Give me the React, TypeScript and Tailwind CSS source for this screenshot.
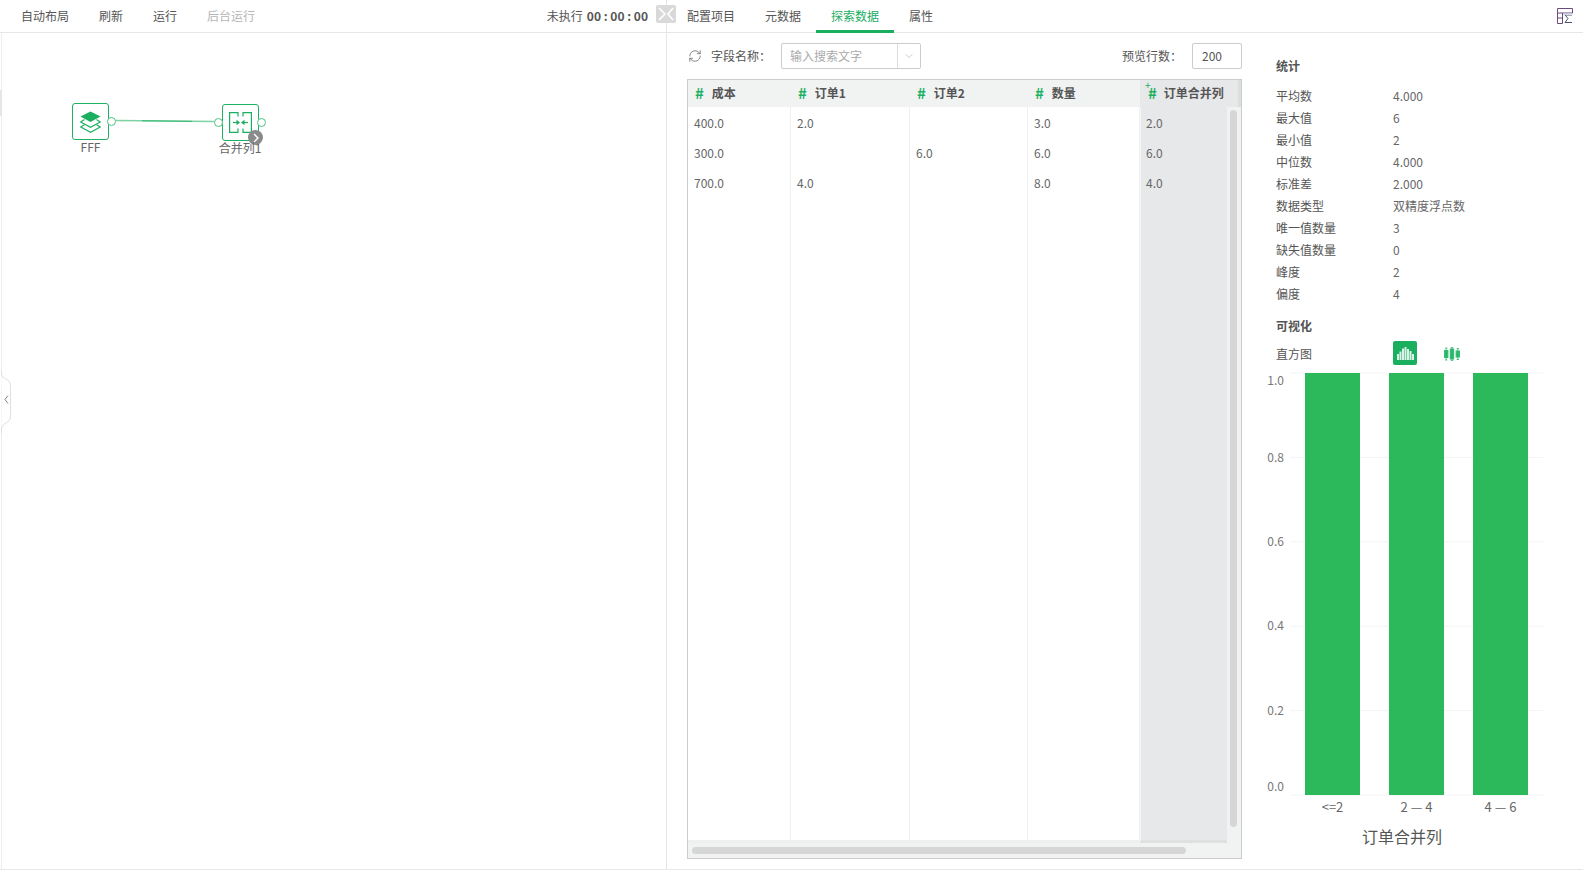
import React from 'react';
import { ChevronDown, RefreshCw } from 'lucide-react';

const GREEN = '#1aae5f';

const columns = [
  { name: '成本', width: 'w-[103px]', values: ['400.0', '300.0', '700.0'] },
  { name: '订单1', width: 'w-[119px]', values: ['2.0', '', '4.0'] },
  { name: '订单2', width: 'w-[118px]', values: ['', '6.0', ''] },
  { name: '数量', width: 'w-[112px]', values: ['3.0', '6.0', '8.0'] },
];

const stats = [
  ['平均数', '4.000'],
  ['最大值', '6'],
  ['最小值', '2'],
  ['中位数', '4.000'],
  ['标准差', '2.000'],
  ['数据类型', '双精度浮点数'],
  ['唯一值数量', '3'],
  ['缺失值数量', '0'],
  ['峰度', '2'],
  ['偏度', '4'],
];

const LayersIcon = () => (
  <svg width="21" height="22" viewBox="0 0 21 22">
    <path d="M10.5 0.5 L20.5 5.5 L10.5 11 L0.5 5.5 Z" fill={GREEN} />
    <path d="M4.5 8.5 L0.7 11 L10.5 16.3 L20.3 11 L16.5 8.5" fill="none" stroke={GREEN} strokeWidth="1.1" />
    <path d="M4.5 13.8 L0.7 16 L10.5 21.3 L20.3 16 L16.5 13.8" fill="none" stroke={GREEN} strokeWidth="1.1" />
  </svg>
);

const MergeIcon = () => (
  <svg width="23" height="21" viewBox="0 0 23 21" fill="none" stroke={GREEN} strokeWidth="1.2">
    <path d="M9 4.5 V0.6 H0.6 V20.4 H9 V16.5" />
    <path d="M14 4.5 V0.6 H22.4 V20.4 H14 V16.5" />
    <path d="M4 10.5 H8" />
    <path d="M19 10.5 H15" />
    <path d="M7.5 7.8 L11 10.5 L7.5 13.2 Z" fill={GREEN} stroke="none" />
    <path d="M15.5 7.8 L12 10.5 L15.5 13.2 Z" fill={GREEN} stroke="none" />
  </svg>
);

const HistogramIcon = () => (
  <svg width="17" height="13" viewBox="0 0 17 13" fill="#fff" opacity="0.85">
    <rect x="0" y="7" width="2" height="6" />
    <rect x="2.5" y="4.5" width="2" height="8.5" />
    <rect x="5" y="1.5" width="2" height="11.5" />
    <rect x="7.5" y="0" width="2" height="13" />
    <rect x="10" y="2" width="2" height="11" />
    <rect x="12.5" y="4" width="2" height="9" />
    <rect x="15" y="7" width="2" height="6" />
  </svg>
);

const BoxIcon = () => (
  <svg width="16" height="14" viewBox="0 0 16 14" fill="#35bd74">
    <rect x="0" y="3" width="4.4" height="8" />
    <rect x="5.8" y="1.5" width="4.4" height="11" />
    <rect x="11.6" y="3.5" width="4.4" height="7" />
    <path d="M2.2 1 V13 M8 0 V14 M13.8 1.5 V12.5 M1 1 H3.4 M1 13 H3.4 M6.8 0.3 H9.2 M6.8 13.7 H9.2 M12.6 1.5 H15 M12.6 12.5 H15" stroke={GREEN} strokeWidth="0.7" fill="none" />
  </svg>
);

const TableSumIcon = () => (
  <svg width="16" height="16" viewBox="0 0 16 16" fill="none">
    <path d="M.5.5 H15.5 V5 H.5 Z M.5 5 V15.5 H5.5 V5 M.5 10 H5.5" stroke="#6b4a7d" strokeWidth="1" />
    <path d="M15 7 H8 L11 10.5 L8 14.5 H15" stroke="#44566e" strokeWidth="1" />
    <rect x="6" y="5.5" width="9.5" height="1.5" fill="#d6dde3" />
  </svg>
);

const Port = ({ className }: { className: string }) => (
  <span className={`absolute w-[9px] h-[9px] rounded-full bg-white border border-[#4fc184] ${className}`} />
);

const Chart = () => {
  const top = 373;
  const bottom = 795;
  const ticks = [
    { label: '1.0', y: 385 },
    { label: '0.8', y: 462 },
    { label: '0.6', y: 546 },
    { label: '0.4', y: 630 },
    { label: '0.2', y: 715 },
    { label: '0.0', y: 791 },
  ];
  const bars = [
    { x: 1305, label: '<=2' },
    { x: 1389, label: '2 — 4' },
    { x: 1473, label: '4 — 6' },
  ];
  return (
    <svg width="310" height="500" viewBox="1250 360 310 500" className="block" fontFamily="'Noto Sans CJK SC', sans-serif">
      {[0, 1, 2, 3, 4, 5].map((i) => {
        const y = top + ((bottom - top) / 5) * i;
        return <line key={i} x1="1290" x2="1543" y1={y} y2={y} stroke="#f4f4f4" />;
      })}
      {bars.map((b) => (
        <g key={b.x}>
          <rect x={b.x} y={top} width="55" height={bottom - top} fill="#2bb95b" />
          <text x={b.x + 27.5} y="812" textAnchor="middle" fontSize="13" fill="#666">{b.label}</text>
        </g>
      ))}
      {ticks.map((t) => (
        <text key={t.label} x="1284" y={t.y} textAnchor="end" fontSize="12" fill="#777">{t.label}</text>
      ))}
      <text x="1402" y="843" textAnchor="middle" fontSize="16" fill="#555">订单合并列</text>
    </svg>
  );
};

export default function App() {
  return (
    <div className="relative flex w-[1583px] h-[870px] overflow-hidden bg-white text-[12px] text-[#555] font-['Noto_Sans_CJK_SC','Noto_Sans',sans-serif] border-b border-[#e8e8e8]">
      {/* canvas side */}
      <div className="relative w-[667px] shrink-0 h-full border-r border-[#e6e6e6] flex flex-col">
        <div className="flex items-center h-[33px] border-b border-[#e6e6e6] pl-[21px] pb-[1px]">
          <span className="mr-[30px]">自动布局</span>
          <span className="mr-[30px]">刷新</span>
          <span className="mr-[30px]">运行</span>
          <span className="text-[#b5b5b5]">后台运行</span>
          <span className="ml-auto mr-[18px] text-[#555]">
            未执行<b className="ml-[4px] font-bold">00 : 00 : 00</b>
          </span>
        </div>
        <div className="relative flex-1 border-l border-[#eee] ml-px">
          <span className="absolute -left-[2px] top-[57px] w-[2px] h-[26px] bg-[#e6e6e6]" />
          {/* link between nodes */}
          <svg className="absolute left-0 top-0" width="300" height="120">
            <line x1="114" y1="87.5" x2="212" y2="88.5" stroke="#7fd2a5" strokeWidth="1.6" />
            <line x1="140" y1="87.8" x2="190" y2="88.3" stroke={GREEN} strokeWidth="0.8" />
          </svg>
          <div className="absolute left-[70px] top-[70px] w-[37px] h-[37px] rounded-[3px] border border-[#1fb163] bg-white flex items-center justify-center">
            <LayersIcon />
            <Port className="-right-[8px] top-[13px]" />
          </div>
          <span className="absolute left-[70px] top-[105px] w-[37px] text-center text-[#666]">FFF</span>
          <div className="absolute left-[220px] top-[71px] w-[37px] h-[37px] rounded-[3px] border border-[#1fb163] bg-white flex items-center justify-center">
            <MergeIcon />
            <Port className="-left-[9px] top-[13px]" />
            <Port className="-right-[8px] top-[13px]" />
            <span className="absolute left-[25px] top-[25px] w-[15px] h-[15px] rounded-full bg-[#8a8a8a] flex items-center justify-center">
              <svg width="8" height="10" viewBox="0 0 8 10" fill="none" stroke="#fff" strokeWidth="1.4">
                <path d="M2 1 L6 5 L2 9" />
              </svg>
            </span>
          </div>
          <span className="absolute left-[208px] top-[106px] w-[60px] text-center text-[#666]">合并列1</span>
        </div>
        {/* side collapse handle */}
        <svg className="absolute left-0 top-[371px]" width="14" height="62" viewBox="0 0 14 62" fill="none">
          <path d="M1.5 0 V3 C1.5 8 10.5 8 10.5 14 V46 C10.5 52 1.5 52 1.5 58 V62" stroke="#dfdfdf" fill="#fff" />
          <path d="M8 24.5 L5 28.5 L8 32.5" stroke="#888" strokeWidth="1" />
        </svg>
      </div>

      {/* data side */}
      <div className="flex-1 flex flex-col min-w-0">
        <div className="flex items-center h-[33px] border-b border-[#e6e6e6] pl-[20px]">
          <span className="mr-[30px]">配置项目</span>
          <span className="mr-[15px]">元数据</span>
          <span className="w-[78px] h-full flex items-center justify-center border-b-[3px] border-[#1aae5f] text-[#1aae5f] mt-[1px] mr-[15px] pt-[2px]">探索数据</span>
          <span>属性</span>
          <span className="ml-auto mr-[10px]"><TableSumIcon /></span>
        </div>
        <div className="flex flex-1 min-h-0">
          {/* preview */}
          <div className="w-[575px] shrink-0 pl-[20px] flex flex-col">
            <div className="flex items-center h-[26px] mt-[10px]">
              <RefreshCw size={14} strokeWidth={1.3} className="ml-[1px] text-[#666]" />
              <span className="ml-[9px]">字段名称：</span>
              <div className="ml-[10px] flex w-[140px] h-[26px] rounded-[2px] border border-[#ccc]">
                <span className="flex-1 pl-[8px] leading-[24px] text-[#aaa]">输入搜索文字</span>
                <span className="w-[23px] flex items-center justify-center border-l border-[#ddd]">
                  <ChevronDown size={12} strokeWidth={1.2} className="text-[#aaa]" />
                </span>
              </div>
              <span className="ml-auto">预览行数：</span>
              <div className="ml-[10px] w-[50px] h-[26px] pl-[9px] leading-[24px] rounded-[2px] border border-[#ccc]">200</div>
            </div>
            <div className="mt-[10px] w-[555px] h-[780px] border border-[#ccc] bg-[#f1f3f3] flex flex-col">
              <div className="flex flex-1 min-h-0">
                {columns.map((c) => (
                  <div key={c.name} className={`${c.width} shrink-0 flex flex-col`}>
                    <div className="h-[27px] flex items-center pl-[7px] pb-[1px] font-bold text-[#555]">
                      <span className="text-[#1fb163] mr-[8px] text-[15px] font-semibold">#</span>
                      {c.name}
                    </div>
                    <div className="flex-1 bg-white border-r border-[#f0f0f0] pl-[6px] pt-[1px] border-b-[3px] border-b-[#eef0f0]">
                      {c.values.map((v, i) => (
                        <div key={i} className="h-[30px] leading-[30px] text-[#666]">{v}</div>
                      ))}
                    </div>
                  </div>
                ))}
                <div className="flex-1 flex flex-col min-w-0">
                  <div className="h-[27px] flex items-center pl-[6px] pb-[1px] font-bold text-[#555] bg-[#e7e8ea] border-r-[3px] border-r-[#dcdddd]">
                    <span className="relative text-[#1fb163] mr-[7px] ml-[2px] text-[15px] font-semibold">
                      #
                      <span className="absolute -left-[3px] -top-[5px] text-[10px] font-normal">+</span>
                    </span>
                    订单合并列
                  </div>
                  <div className="flex flex-1 min-h-0">
                    <div className="w-[87px] bg-[#e7e8ea] pl-[5px] pt-[1px] flex flex-col border-l border-[#f5f5f5] border-b-[3px] border-b-[#dfe0e2]">
                      {['2.0', '6.0', '4.0'].map((v) => (
                        <div key={v} className="h-[30px] leading-[30px] text-[#666]">{v}</div>
                      ))}
                    </div>
                    <div className="flex-1 px-[3px] pt-[3px] pb-[16px]">
                      <div className="h-full w-[7px] rounded-full bg-[#d6d6d6]" />
                    </div>
                  </div>
                </div>
              </div>
              <div className="h-[15px] shrink-0 flex items-center pl-[4px]">
                <div className="w-[494px] h-[7px] rounded-full bg-[#d6d6d6]" />
              </div>
            </div>
          </div>

          {/* stats */}
          <div className="flex-1 min-w-0 pl-[34px] flex flex-col">
            <div className="mt-[25px] h-[16px] leading-[16px] font-bold">统计</div>
            <div className="mt-[11px] flex flex-col">
              {stats.map(([k, v]) => (
                <div key={k} className="flex h-[22px] items-center">
                  <span className="w-[116px] shrink-0">{k}</span>
                  <span className="text-[#666] ml-px">{v}</span>
                </div>
              ))}
            </div>
            <div className="mt-[12px] h-[18px] leading-[18px] font-bold">可视化</div>
            <div className="flex items-center h-[24px] mt-[6px]">
              <span className="w-[116px] shrink-0 pt-[2px]">直方图</span>
              <span className="ml-px w-[24px] h-[24px] rounded-[2px] bg-[#1aae5f] flex items-center justify-center"><HistogramIcon /></span>
              <span className="ml-[27px] pt-[1px]"><BoxIcon /></span>
            </div>
            <div className="-ml-[26px] mt-[-5px]">
              <Chart />
            </div>
          </div>
        </div>
      </div>

      {/* splitter toggle */}
      <button className="absolute left-[656px] top-[5px] w-[20px] h-[18px] rounded-[2px] bg-[#d9d9d9] flex items-center justify-center">
        <svg width="18" height="14" viewBox="0 0 18 14" fill="none" stroke="#fff" strokeWidth="1.6">
          <path d="M2 1 L8 7 L2 13" />
          <path d="M16 1 L11 7 L16 13" />
        </svg>
      </button>
    </div>
  );
}
